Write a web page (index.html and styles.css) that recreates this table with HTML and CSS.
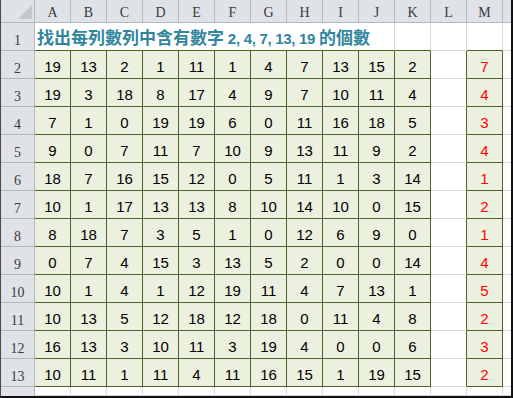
FILE: index.html
```html
<!DOCTYPE html>
<html>
<head>
<meta charset="utf-8">
<link rel="stylesheet" href="styles.css">
</head>
<body>
<div class="frame">
<div class="sheet">
<div class="ch corner"><svg class="tri" width="14" height="14" viewBox="0 0 14 14"><polygon points="14,0 14,14 0,14" fill="#c3c7cc"/></svg></div>
<div class="ch">A</div><div class="ch">B</div><div class="ch">C</div><div class="ch">D</div><div class="ch">E</div><div class="ch">F</div><div class="ch">G</div><div class="ch">H</div><div class="ch">I</div><div class="ch">J</div><div class="ch">K</div><div class="ch">L</div><div class="ch">M</div><div class="ch last"></div>

<div class="rh">1</div>
<div class="c title gb">找出每列數列中含有數字 <span class="lat">2, 4, 7, 13, 19</span> 的個數</div>
<div class="c gb"></div><div class="c"></div><div class="c gb"></div><div class="c last"></div>

<div class="rh">2</div>
<div class="d">19</div><div class="d">13</div><div class="d">2</div><div class="d">1</div><div class="d">11</div><div class="d">1</div><div class="d">4</div><div class="d">7</div><div class="d">13</div><div class="d">15</div><div class="d">2</div>
<div class="c gr"></div><div class="d m">7</div><div class="c last"></div>

<div class="rh">3</div>
<div class="d">19</div><div class="d">3</div><div class="d">18</div><div class="d">8</div><div class="d">17</div><div class="d">4</div><div class="d">9</div><div class="d">7</div><div class="d">10</div><div class="d">11</div><div class="d">4</div>
<div class="c gr"></div><div class="d m">4</div><div class="c last"></div>

<div class="rh">4</div>
<div class="d">7</div><div class="d">1</div><div class="d">0</div><div class="d">19</div><div class="d">19</div><div class="d">6</div><div class="d">0</div><div class="d">11</div><div class="d">16</div><div class="d">18</div><div class="d">5</div>
<div class="c gr"></div><div class="d m">3</div><div class="c last"></div>

<div class="rh">5</div>
<div class="d">9</div><div class="d">0</div><div class="d">7</div><div class="d">11</div><div class="d">7</div><div class="d">10</div><div class="d">9</div><div class="d">13</div><div class="d">11</div><div class="d">9</div><div class="d">2</div>
<div class="c gr"></div><div class="d m">4</div><div class="c last"></div>

<div class="rh">6</div>
<div class="d">18</div><div class="d">7</div><div class="d">16</div><div class="d">15</div><div class="d">12</div><div class="d">0</div><div class="d">5</div><div class="d">11</div><div class="d">1</div><div class="d">3</div><div class="d">14</div>
<div class="c gr"></div><div class="d m">1</div><div class="c last"></div>

<div class="rh">7</div>
<div class="d">10</div><div class="d">1</div><div class="d">17</div><div class="d">13</div><div class="d">13</div><div class="d">8</div><div class="d">10</div><div class="d">14</div><div class="d">10</div><div class="d">0</div><div class="d">15</div>
<div class="c gr"></div><div class="d m">2</div><div class="c last"></div>

<div class="rh">8</div>
<div class="d">8</div><div class="d">18</div><div class="d">7</div><div class="d">3</div><div class="d">5</div><div class="d">1</div><div class="d">0</div><div class="d">12</div><div class="d">6</div><div class="d">9</div><div class="d">0</div>
<div class="c gr"></div><div class="d m">1</div><div class="c last"></div>

<div class="rh">9</div>
<div class="d">0</div><div class="d">7</div><div class="d">4</div><div class="d">15</div><div class="d">3</div><div class="d">13</div><div class="d">5</div><div class="d">2</div><div class="d">0</div><div class="d">0</div><div class="d">14</div>
<div class="c gr"></div><div class="d m">4</div><div class="c last"></div>

<div class="rh">10</div>
<div class="d">10</div><div class="d">1</div><div class="d">4</div><div class="d">1</div><div class="d">12</div><div class="d">19</div><div class="d">11</div><div class="d">4</div><div class="d">7</div><div class="d">13</div><div class="d">1</div>
<div class="c gr"></div><div class="d m">5</div><div class="c last"></div>

<div class="rh">11</div>
<div class="d">10</div><div class="d">13</div><div class="d">5</div><div class="d">12</div><div class="d">18</div><div class="d">12</div><div class="d">18</div><div class="d">0</div><div class="d">11</div><div class="d">4</div><div class="d">8</div>
<div class="c gr"></div><div class="d m">2</div><div class="c last"></div>

<div class="rh">12</div>
<div class="d">16</div><div class="d">13</div><div class="d">3</div><div class="d">10</div><div class="d">11</div><div class="d">3</div><div class="d">19</div><div class="d">4</div><div class="d">0</div><div class="d">0</div><div class="d">6</div>
<div class="c gr"></div><div class="d m">3</div><div class="c last"></div>

<div class="rh">13</div>
<div class="d">10</div><div class="d">11</div><div class="d">1</div><div class="d">11</div><div class="d">4</div><div class="d">11</div><div class="d">16</div><div class="d">15</div><div class="d">1</div><div class="d">19</div><div class="d">15</div>
<div class="c gr"></div><div class="d m">2</div><div class="c last"></div>

<div class="rh"></div>
<div class="c"></div><div class="c"></div><div class="c"></div><div class="c"></div><div class="c"></div><div class="c"></div><div class="c"></div><div class="c"></div><div class="c"></div><div class="c"></div><div class="c"></div><div class="c"></div><div class="c"></div><div class="c last"></div>
</div>
</div>
</body>
</html>
```

FILE: styles.css
```css
html, body {
  margin: 0;
  padding: 0;
  background: #ffffff;
}

.frame {
  width: 513px;
  height: 398px;
  box-sizing: border-box;
  border-left: 1px solid #4a4a4a;
  border-right: 2px solid #111111;
  border-bottom: 2px solid #111111;
  overflow: hidden;
}

.sheet {
  display: grid;
  grid-template-columns: 34px repeat(13, 36px) 8px;
  grid-template-rows: 23px repeat(13, 28px) 9px;
}

.sheet > div {
  box-sizing: border-box;
  overflow: visible;
}

.ch {
  background: #dfe3e8;
  border-right: 1px solid #b4b8bd;
  border-bottom: 1px solid #b4b8bd;
  font-family: "Liberation Serif", serif;
  font-size: 14px;
  line-height: 16px;
  color: #3a3a3a;
  text-align: center;
  padding-top: 5px;
}

.corner {
  display: flex;
  justify-content: flex-end;
  align-items: flex-end;
  padding: 0 2px 3px 0;
}

.tri {
  display: block;
}

.rh {
  background: #dfe3e8;
  border-right: 1px solid #b4b8bd;
  border-bottom: 1px solid #b4b8bd;
  font-family: "Liberation Serif", serif;
  font-size: 14px;
  line-height: 16px;
  color: #3a3a3a;
  text-align: center;
  padding-top: 10px;
}

.c {
  border-right: 1px solid #d8d8d8;
  border-bottom: 1px solid #d8d8d8;
}

.last {
  border-right: none !important;
}

.gb {
  border-bottom-color: #4f6228;
}

.gr {
  border-right-color: #4f6228;
}

.title {
  grid-column: span 10;
  font-family: "Noto Sans CJK TC", "Noto Sans CJK SC", sans-serif;
  font-weight: 700;
  font-size: 17px;
  line-height: 24px;
  color: #31859c;
  padding: 2px 0 0 2px;
  white-space: nowrap;
}

.lat {
  font-family: "Liberation Sans", Arial, sans-serif;
  font-size: 15px;
  font-weight: 700;
  letter-spacing: -0.3px;
}

.d {
  background: #ebf1de;
  border-right: 1px solid #4f6228;
  border-bottom: 1px solid #4f6228;
  font-family: "Liberation Sans", Arial, sans-serif;
  font-size: 15px;
  line-height: 17px;
  color: #000000;
  text-align: center;
  padding-top: 7px;
}

.m {
  color: #ff0000;
}
```
